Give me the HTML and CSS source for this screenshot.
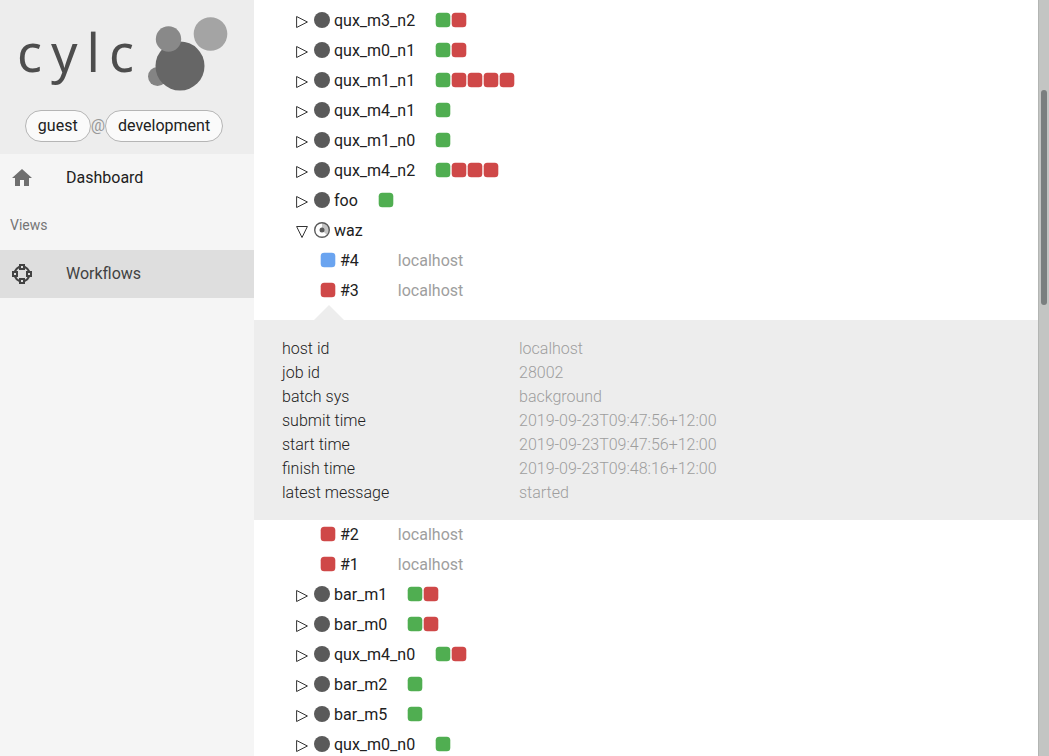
FILE: index.html
```html
<!DOCTYPE html>
<html lang="en">
<head>
<meta charset="utf-8">
<title>Cylc</title>
<link rel="stylesheet" href="styles.css">
</head>
<body>
<div class="app">
  <aside class="sidebar">
    <header class="brand">
      <div class="logo">
        <div class="wordmark"><span>c</span><span>y</span><span>l</span><span>c</span></div>
        <svg class="bubbles" width="80" height="76" viewBox="0 0 80 76" aria-hidden="true">
          <circle cx="9.500" cy="60.500" r="9.500" fill="#848484"/>
          <circle cx="32" cy="50" r="24.500" fill="#666"/>
          <circle cx="20.500" cy="23" r="12.700" fill="#898989"/>
          <circle cx="62.500" cy="18" r="16.800" fill="#a4a4a4"/>
        </svg>
      </div>
      <div class="identity"><span class="chip">guest</span><span class="at">@</span><span class="chip">development</span></div>
    </header>
    <nav>
      <a class="nav-item" href="#dashboard">
        <svg width="24" height="24" viewBox="0 0 24 24" fill="#6f6f6f" aria-hidden="true"><path d="M10 20v-6h4v6h5v-8h3L12 3 2 12h3v8z"/></svg>
        <span>Dashboard</span>
      </a>
      <h2 class="nav-heading">Views</h2>
      <a class="nav-item active" href="#workflows">
        <svg width="24" height="24" viewBox="0 0 24 24" fill="none" stroke="#424242" stroke-width="2" aria-hidden="true">
          <circle cx="12" cy="12" r="7.500"/>
          <g fill="#dedede"><path d="M10 3h4v4h-4zM17 10h4v4h-4zM10 17h4v4h-4zM3 10h4v4h-4z"/></g>
        </svg>
        <span>Workflows</span>
      </a>
    </nav>
  </aside>
  <main class="content">
    <svg class="defs" aria-hidden="true">
      <symbol id="closed" viewBox="0 0 12 14"><path d="M.6 1.500v11l10.800-5.500z" fill="none" stroke="#333"/></symbol>
      <symbol id="open" viewBox="0 0 12 14"><path d="M.6 1.500h10.800l-5.400 11z" fill="none" stroke="#333"/></symbol>
      <symbol id="done" viewBox="0 0 16 16"><circle cx="8" cy="8" r="8" fill="#5a5a5a"/></symbol>
      <symbol id="running" viewBox="0 0 16 16"><circle cx="8" cy="8" r="7.300" fill="#fff"/><path d="M8 8V1a7 7 0 0 1 5 12z" fill="#c4c4c4"/><circle cx="8" cy="8" r="7.300" fill="none" stroke="#5a5a5a" stroke-width="1.400"/><circle cx="8" cy="8" r="2.500" fill="#5a5a5a"/></symbol>
      <symbol id="job" viewBox="0 0 16 16"><rect x=".7" y=".7" width="14.600" height="14.600" rx="3.500"/></symbol>
    </svg>
    <ul class="tree" id="before"></ul>
    <section class="details">
      <dl>
        <dt>host id</dt><dd>localhost</dd>
        <dt>job id</dt><dd>28002</dd>
        <dt>batch sys</dt><dd>background</dd>
        <dt>submit time</dt><dd>2019-09-23T09:47:56+12:00</dd>
        <dt>start time</dt><dd>2019-09-23T09:47:56+12:00</dd>
        <dt>finish time</dt><dd>2019-09-23T09:48:16+12:00</dd>
        <dt>latest message</dt><dd>started</dd>
      </dl>
    </section>
    <ul class="tree" id="after"></ul>
  </main>
  <div class="scrollbar"><div class="thumb"></div></div>
</div>
<script src="tree.js"></script>
</body>
</html>
```
FILE: styles.css
```css
* { box-sizing: border-box; }
body {
  margin: 0;
  font: 16px/24px Roboto, "Liberation Sans", sans-serif;
  color: #212121;
  background: #fff;
}
.app { display: flex; height: 100vh; overflow: hidden; }

.sidebar { flex: 0 0 254px; background: #f5f5f5; }
.brand { background: #ededed; padding: 16px 0 12px; }
.logo { display: flex; gap: 14px; padding-left: 17px; }
.wordmark {
  display: flex;
  gap: 9px;
  font-family: "Noto Sans", sans-serif;
  font-size: 52px;
  line-height: 72px;
  color: #4d4d4d;
}
.identity {
  display: flex;
  justify-content: center;
  align-items: center;
  margin-top: 18px;
  padding-right: 6px;
}
.chip {
  height: 32px;
  padding: 3px 12px;
  border: 1px solid #b5b5b5;
  border-radius: 16px;
  background: #fafafa;
}
.at { color: #999; }
.nav-item {
  display: flex;
  align-items: center;
  gap: 32px;
  height: 48px;
  padding: 0 10px;
  color: #212121;
  text-decoration: none;
}
.nav-item.active { background: #dedede; color: #424242; }
.nav-heading {
  margin: 0;
  padding: 0 10px 2px;
  font-size: 14px;
  font-weight: 400;
  line-height: 46px;
  color: #757575;
}

.content { flex: 1; min-width: 0; overflow: hidden; }
.defs { display: none; }
.tree { margin: 0; padding: 0; list-style: none; }
#before { padding-top: 6px; }
.row { display: flex; align-items: center; height: 30px; padding-left: 42px; }
.row.job { padding-left: 66px; }
.toggle {
  display: flex;
  margin: 2px 6px 0 0;
  padding: 0;
  border: 0;
  background: none;
}
.toggle svg { width: 12px; height: 14px; }
.icon { flex: none; width: 16px; height: 16px; margin: 0 4px 3px 0; }
.jobs { display: flex; margin: 0 0 3px 20px; }
.jobs svg { width: 16px; height: 16px; }
.succeeded { fill: #50ae51; }
.failed { fill: #cf4848; }
.active-job { fill: #6aa4f0; }
.host { margin-left: 39px; color: #9e9e9e; }

.details { position: relative; margin-top: 14px; padding: 17px 28px 15px; background: #ededed; }
.details::before {
  content: "";
  position: absolute;
  left: 60px;
  bottom: 100%;
  border: 15px solid transparent;
  border-top: 0;
  border-bottom-color: #ededed;
}
.details dl {
  display: grid;
  grid-template-columns: 237px 1fr;
  margin: 0;
  font-weight: 300;
}
.details dd { margin: 0; color: #9e9e9e; }

.scrollbar {
  flex: 0 0 11px;
  padding: 90px 2px 0;
  border-left: 1px solid #b3b5b3;
  background: #c3c5c3;
}
.thumb { width: 6px; height: 215px; border-radius: 3px; background: #7a7f7f; }
```
FILE: tree.js
```js
const before = [
  ["qux_m3_n2", "sf"], ["qux_m0_n1", "sf"], ["qux_m1_n1", "sffff"],
  ["qux_m4_n1", "s"], ["qux_m1_n0", "s"], ["qux_m4_n2", "sfff"],
  ["foo", "s"], ["waz", ""], ["#4", "a"], ["#3", "f"]
];
const after = [
  ["#2", "f"], ["#1", "f"], ["bar_m1", "sf"], ["bar_m0", "sf"],
  ["qux_m4_n0", "sf"], ["bar_m2", "s"], ["bar_m5", "s"], ["qux_m0_n0", "s"]
];
const states = { s: "succeeded", f: "failed", a: "active-job" };

function row([name, jobs]) {
  if (name.startsWith("#")) {
    return `<li class="row job"><svg class="icon ${states[jobs]}"><use href="#job"/></svg><span>${name}</span><span class="host">localhost</span></li>`;
  }
  const open = jobs === "";
  const squares = [...jobs].map(j => `<svg class="${states[j]}"><use href="#job"/></svg>`).join("");
  return `<li class="row"><button class="toggle" aria-label="Toggle ${name}" aria-expanded="${open}"><svg><use href="#${open ? "open" : "closed"}"/></svg></button>` +
    `<svg class="icon"><use href="#${open ? "running" : "done"}"/></svg><span>${name}</span><span class="jobs">${squares}</span></li>`;
}

document.getElementById("before").innerHTML = before.map(row).join("");
document.getElementById("after").innerHTML = after.map(row).join("");
```
